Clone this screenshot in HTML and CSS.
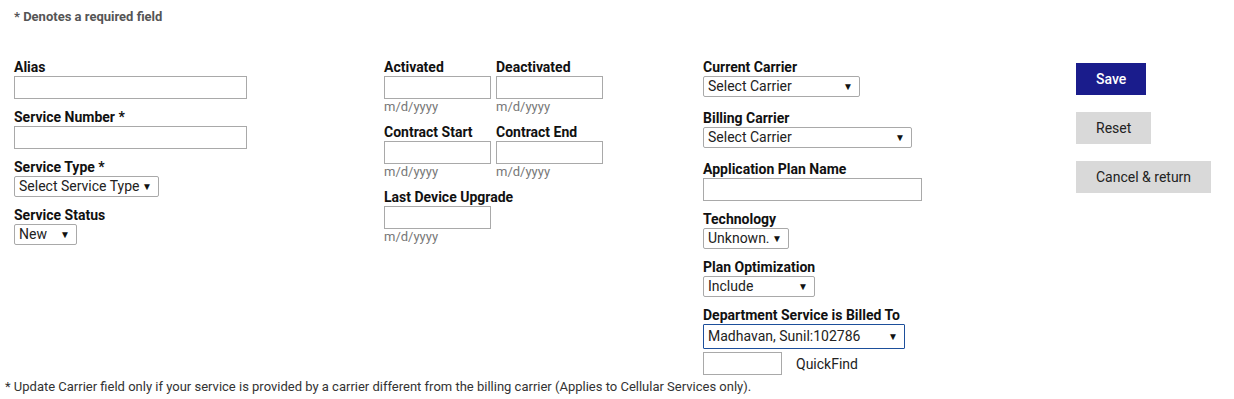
FILE: index.html
```html
<!DOCTYPE html>
<html lang="en">
<head>
	<meta charset="UTF-8">
	<title>Service</title>
	<link rel="stylesheet" href="styles.css">
</head>
<body>
<div class="note-top">* Denotes a required field</div>
<div class="form">
	<div class="col col1">
		<div class="field"><label>Alias</label><input type="text" class="txt w233"></div>
		<div class="field"><label>Service Number *</label><input type="text" class="txt w233"></div>
		<div class="field"><label>Service Type *</label><div class="sel w145"><span>Select Service Type</span><i>▼</i></div></div>
		<div class="field"><label>Service Status</label><div class="sel w63"><span>New</span><i>▼</i></div></div>
	</div>
	<div class="col col2">
		<div class="pair">
			<div class="date"><label>Activated</label><input type="text" class="txt w107"><p>m/d/yyyy</p></div>
			<div class="date"><label>Deactivated</label><input type="text" class="txt w107"><p>m/d/yyyy</p></div>
		</div>
		<div class="pair">
			<div class="date"><label>Contract Start</label><input type="text" class="txt w107"><p>m/d/yyyy</p></div>
			<div class="date"><label>Contract End</label><input type="text" class="txt w107"><p>m/d/yyyy</p></div>
		</div>
		<div class="pair">
			<div class="date"><label>Last Device Upgrade</label><input type="text" class="txt w107"><p>m/d/yyyy</p></div>
		</div>
	</div>
	<div class="col col3">
		<div class="field wide"><label>Current Carrier</label><div class="sel w157"><span>Select Carrier</span><i>▼</i></div></div>
		<div class="field wide"><label>Billing Carrier</label><div class="sel w209"><span>Select Carrier</span><i>▼</i></div></div>
		<div class="field"><label>Application Plan Name</label><input type="text" class="txt w219"></div>
		<div class="field"><label>Technology</label><div class="sel w86"><span>Unknown.</span><i>▼</i></div></div>
		<div class="field"><label>Plan Optimization</label><div class="sel w112"><span>Include</span><i>▼</i></div></div>
		<div class="field last"><label>Department Service is Billed To</label><div class="sel focus w202"><span>Madhavan, Sunil:102786</span><i>▼</i></div></div>
		<div class="quick"><input type="text" class="txt w79"><span>QuickFind</span></div>
	</div>
	<div class="col col4">
		<button class="btn save">Save</button>
		<button class="btn">Reset</button>
		<button class="btn">Cancel &amp; return</button>
	</div>
</div>
<div class="note-bottom">* Update Carrier field only if your service is provided by a carrier different from the billing carrier (Applies to Cellular Services only).</div>
</body>
</html>
```
FILE: styles.css
```css
*{margin: 0;padding: 0;box-sizing: border-box;}
body{font-family: Roboto, "Liberation Sans", sans-serif;color: #111;background: #fff;}
.note-top{font-size: 13px;font-weight: bold;color: #555;line-height: 16px;margin: 9px 0 0 14px;}
.form{display: grid;grid-template-columns: 370px 319px 373px 1fr;padding-left: 14px;margin-top: 34px;}
label{display: block;font-size: 14px;font-weight: bold;line-height: 17px;color: #111;}
.field{margin-bottom: 10px;}
.field.wide{margin-bottom: 13px;}
.field.last{margin-bottom: 3px;}
.txt{display: block;height: 23px;border: 1px solid #a9a9a9;background: #fff;}
.sel{display: flex;align-items: center;justify-content: space-between;height: 21px;border: 1px solid #a9a9a9;border-radius: 2px;padding: 0 6px 1px 4px;font-size: 14px;color: #222;}
.sel i{font-style: normal;font-size: 10px;color: #111;}
.sel.focus{height: 25px;border-color: #1d4f9b;border-radius: 1px;}
.w233{width: 233px;}
.w107{width: 107px;}
.w219{width: 219px;}
.w79{width: 79px;}
.w145{width: 145px;}
.w63{width: 63px;}
.w157{width: 157px;}
.w209{width: 209px;}
.w86{width: 86px;}
.w112{width: 112px;}
.w202{width: 202px;}
.pair{display: flex;gap: 5px;margin-bottom: 10px;}
.date p{font-size: 13px;line-height: 15px;color: #777;}
.quick{display: flex;align-items: center;gap: 14px;font-size: 14px;color: #222;}
.col4{display: flex;flex-direction: column;align-items: flex-start;gap: 17px;padding-top: 4px;}
.btn{height: 32px;padding: 0 20px;border: none;background: #d9d9d9;font-family: Roboto, "Liberation Sans", sans-serif;font-size: 14px;color: #222;}
.btn.save{background: #1a1c8c;color: #fff;font-weight: 500;}
.note-bottom{font-size: 13px;color: #333;margin: 4px 0 0 5px;}
```
